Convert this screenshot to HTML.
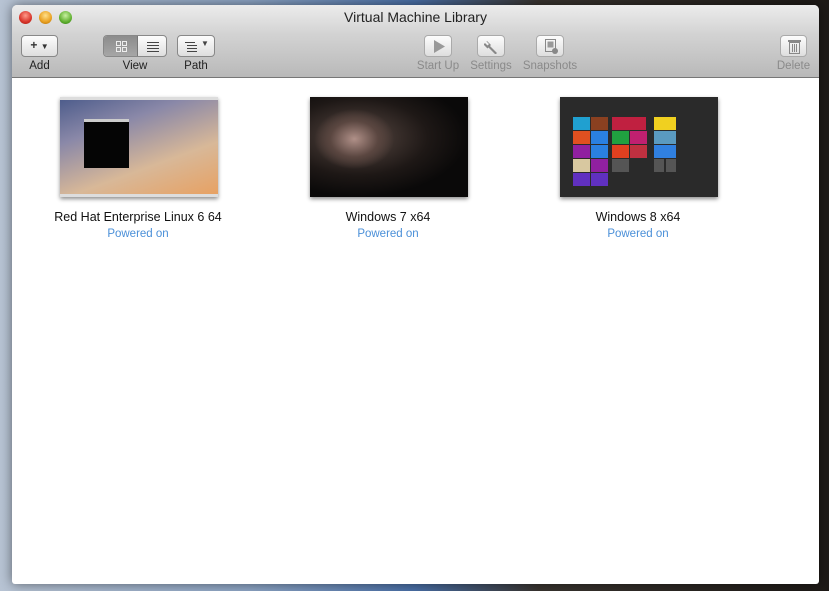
<!DOCTYPE html>
<html><head><meta charset="utf-8"><style>
*{margin:0;padding:0;box-sizing:border-box}
body{width:829px;height:591px;overflow:hidden;position:relative;font-family:"Liberation Sans",sans-serif;
background:linear-gradient(90deg,#b8c4d4 0%,#8ea6c6 30%,#4a70a8 50%,#3a3530 65%,#1e1a17 100%);}
.win{position:absolute;left:12px;top:5px;width:807px;height:579px;border-radius:5px 5px 3px 3px;overflow:hidden;background:#fff;box-shadow:0 0 12px rgba(0,0,0,.5)}
.tb{position:absolute;left:0;top:0;width:807px;height:73px;background:linear-gradient(#ececec,#d3d3d3 40%,#b9b9b9);border-bottom:1px solid #777}
.title{position:absolute;top:4px;width:100%;text-align:center;font-size:14px;color:#222}
.light{position:absolute;top:6px;width:13px;height:13px;border-radius:50%}
.btn{position:absolute;top:30px;height:22px;border:1px solid #888;border-radius:4px;background:linear-gradient(#fdfdfd,#dedede);}
.lab{position:absolute;top:55px;font-size:11.5px;color:#222;text-align:center}
.dis{color:#8a8a8a}
.btn.d{border-color:#aaa}
.vm{position:absolute;top:92px;width:240px;text-align:center}
.th{position:absolute;width:158px;height:100px;box-shadow:0 2px 4px rgba(0,0,0,.45)}
.name{position:absolute;top:113px;width:240px;font-size:12.5px;color:#111}
.st{position:absolute;top:131px;width:240px;font-size:11.5px;color:#4a8fd8}
.t{position:absolute;width:17px;height:13px}
</style></head><body>
<div class="win">
 <div class="tb">
  <div class="light" style="left:7px;background:radial-gradient(circle at 50% 35%,#ff9a8a,#d8342a 60%,#9e1a12)"></div>
  <div class="light" style="left:27px;background:radial-gradient(circle at 50% 35%,#ffe08a,#e9a020 60%,#a86a0a)"></div>
  <div class="light" style="left:47px;background:radial-gradient(circle at 50% 35%,#c8f0a0,#60b030 60%,#2e7a12)"></div>
  <div class="title">Virtual Machine Library</div>
  <div class="btn" style="left:9px;width:37px;font-size:12px;text-align:center;line-height:19px;color:#333"><b>+</b> <span style="font-size:8px">▼</span></div>
  <div class="lab" style="left:9px;width:37px">Add</div>
  <div class="btn" style="left:91px;width:64px;overflow:hidden;padding:0">
   <div style="position:absolute;left:0;top:0;width:34px;height:20px;background:linear-gradient(#8c8c8c,#a6a6a6);border-right:1px solid #777"></div>
   <svg style="position:absolute;left:12px;top:5px" width="11" height="11"><g fill="none" stroke="#eee"><rect x=".5" y=".5" width="4" height="4"/><rect x="6.5" y=".5" width="4" height="4"/><rect x=".5" y="6.5" width="4" height="4"/><rect x="6.5" y="6.5" width="4" height="4"/></g></svg>
   <svg style="position:absolute;left:43px;top:5px" width="12" height="11"><g stroke="#444"><line x1="0" y1="1.5" x2="12" y2="1.5"/><line x1="0" y1="4.5" x2="12" y2="4.5"/><line x1="0" y1="7.5" x2="12" y2="7.5"/><line x1="0" y1="10.5" x2="12" y2="10.5"/></g></svg>
  </div>
  <div class="lab" style="left:91px;width:64px">View</div>
  <div class="btn" style="left:165px;width:38px">
   <svg style="position:absolute;left:7px;top:5px" width="12" height="11"><g stroke="#444"><line x1="0" y1="1.5" x2="10" y2="1.5"/><line x1="2" y1="4.5" x2="12" y2="4.5"/><line x1="2" y1="7.5" x2="12" y2="7.5"/><line x1="2" y1="10.5" x2="12" y2="10.5"/></g></svg>
   <span style="position:absolute;left:23px;top:3px;font-size:8px;color:#444">▼</span>
  </div>
  <div class="lab" style="left:165px;width:38px">Path</div>
  <div class="btn d" style="left:412px;width:28px"><svg style="position:absolute;left:9px;top:4px" width="11" height="13"><path d="M0 0L11 6.5L0 13Z" fill="#999"/></svg></div>
  <div class="lab dis" style="left:398px;width:56px">Start Up</div>
  <div class="btn d" style="left:465px;width:28px"><svg style="position:absolute;left:6px;top:3px" width="16" height="15"><path d="M3 2l4 4-1 1 7 7-1.5 1.5-7-7-1 1-4-4 1.5-1.5 2.5 2.5 1.5-1.5-2.5-2.5z" fill="#888"/></svg></div>
  <div class="lab dis" style="left:452px;width:54px">Settings</div>
  <div class="btn d" style="left:524px;width:28px"><svg style="position:absolute;left:8px;top:3px" width="14" height="16"><rect x=".5" y=".5" width="10" height="12" fill="none" stroke="#888"/><rect x="2.5" y="2.5" width="6" height="6" fill="#999"/><circle cx="10" cy="12" r="3" fill="#888"/></svg></div>
  <div class="lab dis" style="left:505px;width:66px">Snapshots</div>
  <div class="btn d" style="left:768px;width:27px"><svg style="position:absolute;left:7px;top:3px" width="13" height="15"><rect x="0" y="1" width="13" height="2" fill="#888"/><rect x="1.5" y="3.5" width="10" height="11" fill="none" stroke="#888"/><g stroke="#888"><line x1="4.5" y1="5" x2="4.5" y2="13"/><line x1="6.5" y1="5" x2="6.5" y2="13"/><line x1="8.5" y1="5" x2="8.5" y2="13"/></g></svg></div>
  <div class="lab dis" style="left:760px;width:43px">Delete</div>
 </div>
 <div class="vm" style="left:6px">
  <div class="th" style="left:42px;top:0;background:linear-gradient(160deg,#4a5a8a 0%,#8a88a8 30%,#d8b898 65%,#e8a060 100%)">
   <div style="position:absolute;left:0;top:0;width:158px;height:3px;background:#ddd"></div>
   <div style="position:absolute;left:0;bottom:0;width:158px;height:3px;background:#ddd"></div>
   <div style="position:absolute;left:24px;top:22px;width:45px;height:49px;background:#050505;border-top:3px solid #ccc"></div>
  </div>
  <div class="name">Red Hat Enterprise Linux 6 64</div><div class="st">Powered on</div>
 </div>
 <div class="vm" style="left:256px">
  <div class="th" style="left:42px;top:0;background:radial-gradient(ellipse 40px 30px at 28% 42%,#b09088,#5a4640 60%,transparent 100%),radial-gradient(ellipse at 30% 40%,#5a4a44,#1e1816 45%,#0a0909 70%)"></div>
  <div class="name">Windows 7 x64</div><div class="st">Powered on</div>
 </div>
 <div class="vm" style="left:506px">
  <div class="th" style="left:42px;top:0;background:#2a2a2a">
   <div class="t" style="left:13px;top:20px;background:#20a0d0"></div>
   <div class="t" style="left:31px;top:20px;background:#8a4020"></div>
   <div class="t" style="left:13px;top:34px;background:#e05020"></div>
   <div class="t" style="left:31px;top:34px;background:#2a80e0"></div>
   <div class="t" style="left:13px;top:48px;background:#9020a0"></div>
   <div class="t" style="left:31px;top:48px;background:#2a80e0"></div>
   <div class="t" style="left:13px;top:62px;background:#d8c8a0"></div>
   <div class="t" style="left:31px;top:62px;background:#9020a0"></div>
   <div class="t" style="left:13px;top:76px;background:#6030c0"></div>
   <div class="t" style="left:31px;top:76px;background:#6030c0"></div>
   <div class="t" style="left:52px;top:20px;width:34px;background:#c02040"></div>
   <div class="t" style="left:52px;top:34px;background:#20a040"></div>
   <div class="t" style="left:70px;top:34px;background:#c02070"></div>
   <div class="t" style="left:52px;top:48px;background:#e04020"></div>
   <div class="t" style="left:70px;top:48px;background:#c03040"></div>
   <div class="t" style="left:52px;top:62px;background:#555"></div>
   <div class="t" style="left:94px;top:20px;width:22px;background:#f0d020"></div>
   <div class="t" style="left:94px;top:34px;width:22px;background:#5a9ac0"></div>
   <div class="t" style="left:94px;top:48px;width:22px;background:#3080e0"></div>
   <div class="t" style="left:94px;top:62px;width:10px;background:#555"></div>
   <div class="t" style="left:106px;top:62px;width:10px;background:#555"></div>
  </div>
  <div class="name">Windows 8 x64</div><div class="st">Powered on</div>
 </div>
</div>
</body></html>
